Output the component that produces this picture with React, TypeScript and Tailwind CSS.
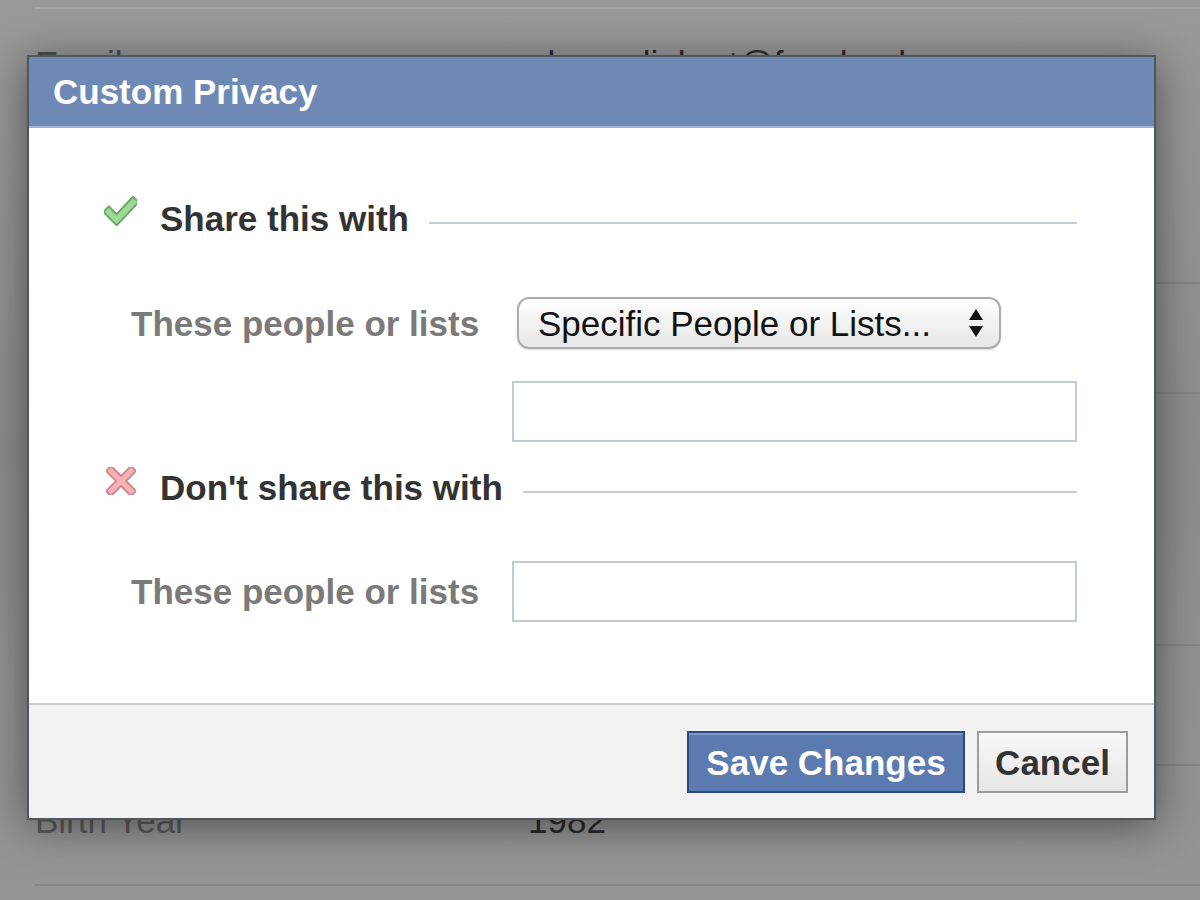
import React from "react";

const F = { fontFamily: '"Liberation Sans", Arial, sans-serif' };

function CheckIcon() {
  return (
    <svg width="34" height="30" viewBox="0 0 34 30">
      <path d="M5 16 L13 24 L30 6" fill="none" stroke="#6aa766" strokeWidth="10" strokeLinejoin="miter" strokeLinecap="square" />
      <path d="M5 16 L13 24 L30 6" fill="none" stroke="#9fd996" strokeWidth="6" strokeLinejoin="miter" strokeLinecap="square" />
    </svg>
  );
}

function XIcon() {
  return (
    <svg width="30" height="28" viewBox="0 0 30 28">
      <path d="M5 4 L25 24 M25 4 L5 24" fill="none" stroke="#d48890" strokeWidth="9" strokeLinecap="square" />
      <path d="M5 4 L25 24 M25 4 L5 24" fill="none" stroke="#f6b3b7" strokeWidth="5" strokeLinecap="square" />
    </svg>
  );
}

function Arrows() {
  return (
    <svg width="16" height="32" viewBox="0 0 16 32">
      <path d="M8 2 L15 13 L1 13 Z" fill="#111" />
      <path d="M8 30 L15 19 L1 19 Z" fill="#111" />
    </svg>
  );
}

export default function App() {
  return (
    <div
      className="relative w-[1200px] h-[900px] overflow-hidden bg-gradient-to-b from-[#999999] via-[#8c8c8c] to-[#959595]"
      style={F}
    >
      {/* background page */}
      <div className="flex flex-col pt-[7px] pl-[35px]">
        <div className="h-[275px] border-t-2 border-[#a4a4a4] relative flex text-[35px] leading-none">
          <div className="pt-[37px] w-[493px] text-[#4a4a4a]">Email</div>
          <div className="pt-[37px] text-[#2a2a2a]">alanna.liebert@facebook.com</div>
        </div>
        <div className="h-[110px] border-t-2 border-[#848484]" />
        <div className="h-[252px] border-t-2 border-[#848484]" />
        <div className="h-[120px] border-t-2 border-[#848484]" />
        <div className="h-[120px] border-t-2 border-[#848484] flex text-[35px] leading-none">
          <div className="pt-[37px] w-[493px] text-[#5a5a5a]">Birth Year</div>
          <div className="pt-[37px] text-[#2a2a2a]">1982</div>
        </div>
        <div className="border-t-2 border-[#868686]" />
      </div>

      {/* dialog */}
      <div className="absolute left-[27px] top-[55px] w-[1129px] h-[765px] border-2 border-[#50565f] bg-white shadow-[0_6px_40px_rgba(0,0,0,0.45)] flex flex-col">
        <div className="h-[71px] bg-[#6d89b4] border-b-2 border-[#9fb3d2] flex items-center pl-[24px]">
          <span className="text-white font-bold text-[35px] leading-none">Custom Privacy</span>
        </div>

        <div className="h-[575px] flex flex-col pl-[75px] pr-[77px] pt-[70px]">
          <div className="h-[40px] flex items-center">
            <div className="w-[33px] -mt-[14px] flex justify-center"><CheckIcon /></div>
            <span className="ml-[23px] font-bold text-[35px] leading-none text-[#333333]">Share this with</span>
            <div className="flex-1 ml-[20px] mt-[10px] h-[2px] bg-[#c6cdd8]" />
          </div>

          <div className="mt-[59px] h-[52px] flex items-center">
            <span className="ml-[27px] w-[381px] font-bold text-[35px] leading-none text-[#7a7a7a]">These people or lists</span>
            <div className="ml-[5px] w-[484px] h-[52px] rounded-[12px] border-2 border-[#a9acb0] bg-gradient-to-b from-[#ffffff] to-[#e6e6e6] shadow-[0_1px_2px_rgba(0,0,0,0.15)] flex items-center pl-[19px] pr-[15px]">
              <span className="flex-1 text-[35px] leading-none text-[#111111]">Specific People or Lists...</span>
              <Arrows />
            </div>
          </div>

          <div className="mt-[32px] h-[61px] flex">
            <div className="ml-[408px] flex-1 border-2 border-[#c3cad5] bg-white" />
          </div>

          <div className="mt-[25px] h-[40px] flex items-center">
            <div className="w-[33px] -mt-[12px] flex justify-center"><XIcon /></div>
            <span className="ml-[23px] font-bold text-[35px] leading-none text-[#333333]">Don't share this with</span>
            <div className="flex-1 ml-[20px] mt-[10px] h-[2px] bg-[#c6cdd8]" />
          </div>

          <div className="mt-[54px] h-[61px] flex items-center">
            <span className="ml-[27px] w-[381px] font-bold text-[35px] leading-none text-[#7a7a7a]">These people or lists</span>
            <div className="flex-1 h-[61px] border-2 border-[#c3cad5] bg-white" />
          </div>
        </div>

        <div className="flex-1 border-t-2 border-[#cccccc] bg-[#f2f2f2] flex justify-end items-start pt-[26px] pr-[26px] gap-[12px]">
          <button className="h-[62px] w-[278px] bg-[#5b7ab0] border-2 border-[#2c4a7f] shadow-[inset_0_2px_0_#7c98c6] text-white font-bold text-[35px] leading-none flex items-center justify-center">
            Save Changes
          </button>
          <button className="h-[62px] w-[151px] bg-gradient-to-b from-[#f8f8f8] to-[#e6e6e6] border-2 border-[#9c9c9c] text-[#333333] font-bold text-[35px] leading-none flex items-center justify-center">
            Cancel
          </button>
        </div>
      </div>
    </div>
  );
}
